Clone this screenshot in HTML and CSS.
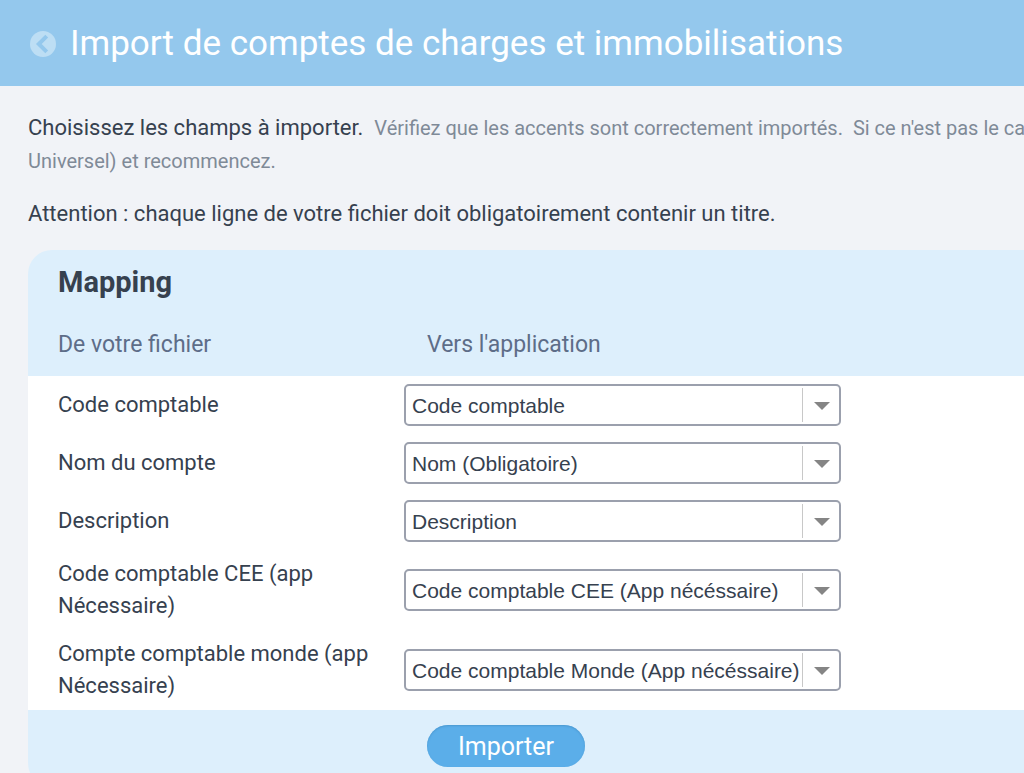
FILE: index.html
```html
<!DOCTYPE html>
<html lang="fr">
<head>
    <meta charset="UTF-8">
    <meta name="viewport" content="width=device-width, initial-scale=1.0">
    <title>Import de comptes de charges et immobilisations</title>
    <link rel="stylesheet" href="styles.css">
</head>
<body>
    <header class="header">
        <a href="#" class="back-link" aria-label="Retour">
            <svg class="back-icon" viewBox="0 0 26 26">
                <circle cx="13" cy="13" r="13"/>
                <path d="M15.300 6.500 8.800 13l6.500 6.500"/>
            </svg>
        </a>
        <h1>Import de comptes de charges et immobilisations</h1>
    </header>

    <main class="content">
        <p class="intro">Choisissez les champs à importer.&nbsp; <span class="hint">Vérifiez que les accents sont correctement importés.&nbsp; Si ce n'est pas le cas<br>Universel) et recommencez.</span></p>
        <p class="intro">Attention : chaque ligne de votre fichier doit obligatoirement contenir un titre.</p>

        <form class="card">
            <h2>Mapping</h2>
            <table class="mapping">
                <thead>
                    <tr>
                        <th class="col-source">De votre fichier</th>
                        <th class="col-target">Vers l'application</th>
                    </tr>
                </thead>
                <tbody>
                    <tr>
                        <td><label for="code">Code comptable</label></td>
                        <td>
                            <div class="select-box">
                                <select id="code"><option>Code comptable</option></select>
                            </div>
                        </td>
                    </tr>
                    <tr>
                        <td><label for="nom">Nom du compte</label></td>
                        <td>
                            <div class="select-box">
                                <select id="nom"><option>Nom (Obligatoire)</option></select>
                            </div>
                        </td>
                    </tr>
                    <tr>
                        <td><label for="description">Description</label></td>
                        <td>
                            <div class="select-box">
                                <select id="description"><option>Description</option></select>
                            </div>
                        </td>
                    </tr>
                    <tr>
                        <td><label for="code-cee">Code comptable CEE (app Nécessaire)</label></td>
                        <td>
                            <div class="select-box">
                                <select id="code-cee"><option>Code comptable CEE (App nécéssaire)</option></select>
                            </div>
                        </td>
                    </tr>
                    <tr>
                        <td><label for="code-monde">Compte comptable monde (app Nécessaire)</label></td>
                        <td>
                            <div class="select-box">
                                <select id="code-monde"><option>Code comptable Monde (App nécéssaire)</option></select>
                            </div>
                        </td>
                    </tr>
                </tbody>
            </table>
            <div class="card-footer">
                <button type="submit" class="import-button">Importer</button>
            </div>
        </form>
    </main>
</body>
</html>
```
FILE: styles.css
```css
:root {
    --header-color: #94c8ed;
    --page-color: #f1f3f7;
    --panel-color: #ddeffc;
    --text-color: #36414f;
    --hint-color: #7f8a97;
    --column-color: #5d6d88;
    --border-color: #9ba0ad;
    --accent-color: #5baee9;
}

* {
    box-sizing: border-box;
}

body {
    margin: 0;
    overflow: hidden;
    background-color: var(--page-color);
    color: var(--text-color);
    font-family: Roboto, "Liberation Sans", sans-serif;
    font-size: 22px;
    line-height: 32px;
}

.header {
    display: flex;
    align-items: center;
    gap: 14px;
    padding: 22px 30px 20px;
    background-color: var(--header-color);
    color: #fff;
}

.back-link {
    display: flex;
}

.back-icon {
    width: 26px;
    height: 26px;
}

.back-icon circle {
    fill: #bddef4;
}

.back-icon path {
    fill: none;
    stroke: var(--header-color);
    stroke-width: 4;
    stroke-linejoin: miter;
    stroke-linecap: square;
}

h1 {
    margin: 0;
    font-size: 35px;
    font-weight: 400;
    line-height: 44px;
    white-space: nowrap;
}

.content {
    padding: 25px 0 0 28px;
}

.intro {
    margin: 0 0 20px;
    line-height: 33px;
    white-space: nowrap;
}

.hint {
    color: var(--hint-color);
    font-size: 20px;
    line-height: 1;
}

.card {
    overflow: hidden;
    background-color: var(--panel-color);
    border-radius: 24px 0 0 24px;
}

h2 {
    margin: 0;
    padding: 16px 30px;
    font-size: 29px;
    font-weight: 700;
    line-height: 32px;
}

.mapping {
    width: 100%;
    border-collapse: collapse;
    table-layout: fixed;
}

.mapping th {
    padding: 15px 0 15px 30px;
    color: var(--column-color);
    font-size: 23px;
    font-weight: 400;
    text-align: left;
}

.mapping .col-source {
    width: 376px;
}

.mapping .col-target {
    padding-left: 23px;
}

.mapping tbody {
    background-color: #fff;
}

.mapping td {
    padding: 8px 0;
}

.mapping td:first-child {
    padding: 8px 30px;
}

.select-box {
    position: relative;
    width: 437px;
}

.select-box select {
    display: block;
    width: 100%;
    height: 42px;
    padding: 0 38px 0 6px;
    appearance: none;
    background-color: #fff;
    border: 2px solid var(--border-color);
    border-radius: 5px;
    color: var(--text-color);
    font-family: "Liberation Sans", Arial, sans-serif;
    font-size: 21px;
}

/* separator and arrow over the select */
.select-box::before,
.select-box::after {
    content: "";
    position: absolute;
    pointer-events: none;
}

.select-box::before {
    top: 4px;
    bottom: 4px;
    right: 38px;
    width: 1px;
    background-color: #c8c8c8;
}

.select-box::after {
    top: 18px;
    right: 11px;
    border: 8px solid transparent;
    border-top-color: #858585;
    border-bottom: none;
}

.card-footer {
    padding: 15px 0 20px 399px;
}

.import-button {
    display: block;
    height: 42px;
    padding: 0 31px;
    background-color: var(--accent-color);
    border: none;
    border-radius: 21px;
    box-shadow: inset 0 1px 2px #4a98d0;
    color: #fff;
    font-family: inherit;
    font-size: 25px;
    cursor: pointer;
}
```
